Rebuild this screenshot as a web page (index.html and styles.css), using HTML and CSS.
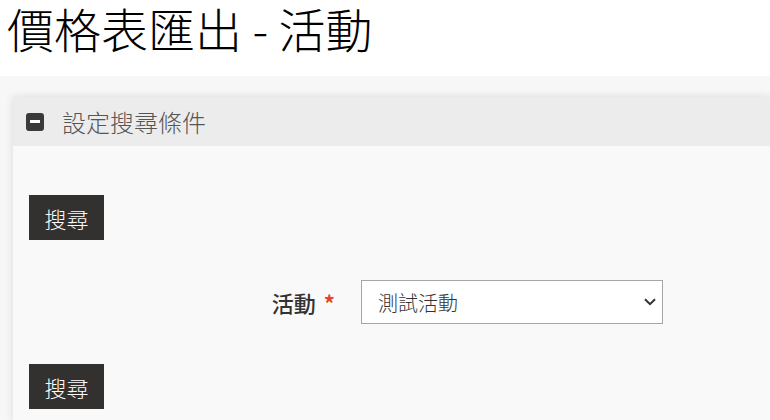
FILE: index.html
```html
<!DOCTYPE html>
<html lang="zh-Hant">
<head>
    <meta charset="UTF-8">
    <meta name="viewport" content="width=device-width, initial-scale=1.0">
    <title>價格表匯出 - 活動</title>
    <link rel="stylesheet" href="styles.css">
</head>
<body>
    <h1 class="page-title">價格表匯出 - 活動</h1>

    <div class="content">
        <!-- 搜尋條件 -->
        <div class="panel">
            <div class="panel-heading">
                <span class="toggle-icon"><span class="toggle-bar"></span></span>
                <span class="panel-title">設定搜尋條件</span>
            </div>
            <div class="panel-body">
                <button class="btn" type="button">搜尋</button>

                <div class="form-row">
                    <label class="control-label" for="eventSelect">活動<span class="required">*</span></label>
                    <span class="select-wrap">
                        <select id="eventSelect" class="form-control">
                            <option>測試活動</option>
                        </select>
                        <svg class="select-arrow" width="12" height="8" viewBox="0 0 12 8">
                            <path d="M1 1.2 L6 6.2 L11 1.2" fill="none" stroke="#333" stroke-width="2"/>
                        </svg>
                    </span>
                </div>

                <button class="btn" type="button">搜尋</button>
            </div>
        </div>
    </div>
</body>
</html>
```

FILE: styles.css
```css
body {
    margin: 0;
    background-color: #ffffff;
    font-family: "Noto Sans CJK TC", "Noto Sans", sans-serif;
    color: #333333;
}

.page-title {
    margin: 0;
    padding: 2px 7px 22px;
    font-size: 47px;
    font-weight: 300;
    line-height: 52px;
    color: #000000;
}

.content {
    background-color: #f7f7f7;
    padding: 21px 0 20px 13px;
}

.panel {
    background-color: #f9f9f9;
    box-shadow: 0 0 8px rgba(0, 0, 0, 0.12);
}

.panel-heading {
    display: flex;
    align-items: center;
    height: 49px;
    padding-left: 13px;
    background-color: #ececec;
}

.toggle-icon {
    display: flex;
    align-items: center;
    justify-content: center;
    width: 18px;
    height: 18px;
    border-radius: 3px;
    background-color: #3a3a3a;
}

.toggle-bar {
    width: 10px;
    height: 3px;
    background-color: #ffffff;
}

.panel-title {
    margin-left: 18px;
    font-size: 24px;
    font-weight: 300;
    color: #555555;
}

.panel-body {
    padding: 49px 0 12px 16px;
}

.btn {
    display: block;
    width: 75px;
    height: 45px;
    padding: 0;
    border: none;
    background-color: #32312f;
    color: #ffffff;
    font-family: inherit;
    font-size: 22px;
    font-weight: 300;
}

.form-row {
    display: flex;
    align-items: center;
    margin: 40px 0;
}

.control-label {
    width: 306px;
    text-align: right;
    font-size: 22px;
    font-weight: 500;
    color: #333333;
}

.required {
    margin-left: 8px;
    font-weight: 700;
    color: #e8412c;
}

.select-wrap {
    position: relative;
    margin-left: 26px;
}

.form-control {
    display: block;
    width: 302px;
    height: 44px;
    padding: 0 30px 0 16px;
    border: 1px solid #a6a6a6;
    border-radius: 0;
    background-color: #ffffff;
    color: #333333;
    font-family: inherit;
    font-size: 20px;
    font-weight: 300;
    appearance: none;
    -webkit-appearance: none;
}

.select-arrow {
    position: absolute;
    top: 18px;
    right: 7px;
}
```
